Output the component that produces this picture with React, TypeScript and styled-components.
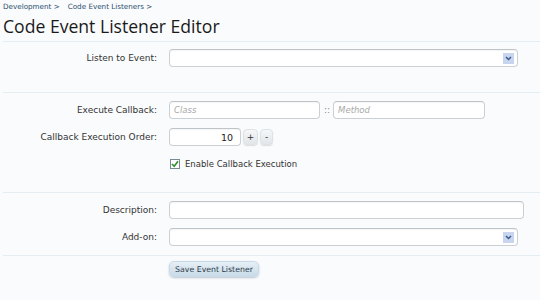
import React from "react";
import styled, { createGlobalStyle } from "styled-components";

const Global = createGlobalStyle`
  html, body { margin: 0; padding: 0; }
  body {
    background: #fafbfd;
    font-family: "DejaVu Sans", Verdana, sans-serif;
    color: #333;
    width: 540px;
    height: 300px;
    overflow: hidden;
  }
`;

const Page = styled.div`
  padding-left: 3px;
`;

const Breadcrumb = styled.div`
  display: flex;
  gap: 8px;
  height: 14px;
  line-height: 13px;
  font-size: 7.2px;
  color: #2b4f6d;
`;

const Crumb = styled.span`
  white-space: nowrap;
`;

const Header = styled.div`
  padding-bottom: 3px;
  border-bottom: 1px solid #e1eef4;
`;

const Title = styled.h1`
  margin: 0;
  font-family: "Open Sans", sans-serif;
  font-weight: 400;
  font-size: 17.6px;
  line-height: 24px;
  color: #1a1a1a;
`;

const Fieldset = styled.div<{ $top: number; $bottom: number; $gap?: number }>`
  display: flex;
  flex-direction: column;
  gap: ${(p) => p.$gap ?? 9}px;
  padding-top: ${(p) => p.$top}px;
  padding-bottom: ${(p) => p.$bottom}px;
  border-bottom: 1px solid #e4edf2;
`;

const Row = styled.div`
  display: flex;
  align-items: center;
  height: 18px;
`;

const Label = styled.div`
  width: 154px;
  margin-right: 12px;
  text-align: right;
  font-size: 9px;
  color: #333;
  white-space: nowrap;
`;

const Controls = styled.div`
  display: flex;
  align-items: center;
  height: 18px;
`;

const TextInput = styled.div<{ $w: number; $align?: string }>`
  box-sizing: border-box;
  width: ${(p) => p.$w}px;
  height: 18px;
  background: #fff;
  border: 1px solid #cbd0d4;
  border-top-color: #bfc4c9;
  border-radius: 4px;
  box-shadow: inset 0 1px 1px rgba(0, 0, 0, 0.04);
  display: flex;
  align-items: center;
  justify-content: ${(p) => p.$align ?? "flex-start"};
  padding: 0 4px;
  font-size: 9px;
`;

const Placeholder = styled.span`
  font-style: italic;
  color: #a9a9a9;
  font-size: 8.5px;
`;

const NumberText = styled.span`
  font-size: 9.5px;
  color: #222;
  padding-right: 3px;
`;

const SelectBox = styled(TextInput)`
  justify-content: flex-end;
  padding: 0 3px 0 4px;
`;

const ArrowBox = styled.span`
  width: 11px;
  height: 11px;
  background: #c7d5ee;
  display: flex;
  align-items: center;
  justify-content: center;
`;

const Sep = styled.span`
  font-size: 9px;
  color: #888;
  margin: 0 3px 0 4px;
`;

const Spin = styled.button<{ $w: number }>`
  box-sizing: border-box;
  width: ${(p) => p.$w}px;
  height: 16px;
  margin-left: 2px;
  padding: 0;
  border: 1px solid #dde2e6;
  border-radius: 4px;
  background: linear-gradient(#f5f7f8, #e2e6ea);
  box-shadow: 0 1px 1px rgba(0, 0, 0, 0.12);
  font-family: "DejaVu Sans", sans-serif;
  font-size: 9px;
  line-height: 14px;
  color: #333;
`;

const CheckWrap = styled.label`
  display: flex;
  align-items: center;
  gap: 5px;
  margin-left: 1px;
  font-size: 8.5px;
  color: #333;
`;

const CheckBox = styled.span`
  box-sizing: border-box;
  width: 10px;
  height: 10px;
  border: 1px solid #7a8a95;
  background: #fff;
  display: flex;
  align-items: center;
  justify-content: center;
`;

const Submit = styled.div`
  display: flex;
  padding-top: 5px;
  padding-left: 166px;
`;

const SaveButton = styled.button`
  box-sizing: border-box;
  width: 90px;
  height: 16px;
  padding: 0;
  border: 1px solid #c9d9e6;
  border-radius: 5px;
  background: linear-gradient(#e6eff6, #c9dbe8);
  box-shadow: 0 1px 2px rgba(70, 100, 130, 0.35);
  font-family: "DejaVu Sans", sans-serif;
  font-size: 7.8px;
  color: #2a3a48;
  white-space: nowrap;
`;

const Arrow = () => (
  <ArrowBox>
    <svg width="7" height="5" viewBox="0 0 7 5">
      <path d="M1 1 L3.5 3.5 L6 1" fill="none" stroke="#3c5a8c" strokeWidth="1.5" />
    </svg>
  </ArrowBox>
);

export default function App() {
  return (
    <Page>
      <Global />
      <Breadcrumb>
        <Crumb>Development &gt;</Crumb>
        <Crumb>Code Event Listeners &gt;</Crumb>
      </Breadcrumb>
      <Header>
        <Title>Code Event Listener Editor</Title>
      </Header>

      <Fieldset $top={7} $bottom={25}>
        <Row>
          <Label>Listen to Event:</Label>
          <SelectBox $w={349}>
            <Arrow />
          </SelectBox>
        </Row>
      </Fieldset>

      <Fieldset $top={8} $bottom={19}>
        <Row>
          <Label>Execute Callback:</Label>
          <Controls>
            <TextInput $w={151}>
              <Placeholder>Class</Placeholder>
            </TextInput>
            <Sep>::</Sep>
            <TextInput $w={152}>
              <Placeholder>Method</Placeholder>
            </TextInput>
          </Controls>
        </Row>
        <Row>
          <Label>Callback Execution Order:</Label>
          <Controls>
            <TextInput $w={72} $align="flex-end">
              <NumberText>10</NumberText>
            </TextInput>
            <Spin $w={15}>+</Spin>
            <Spin $w={13}>-</Spin>
          </Controls>
        </Row>
        <Row>
          <Label />
          <CheckWrap>
            <CheckBox>
              <svg width="8" height="8" viewBox="0 0 8 8">
                <path d="M1 4 L3.2 6.3 L7 1.2" fill="none" stroke="#2f8f2a" strokeWidth="1.6" />
              </svg>
            </CheckBox>
            Enable Callback Execution
          </CheckWrap>
        </Row>
      </Fieldset>

      <Fieldset $top={8} $bottom={9}>
        <Row>
          <Label>Description:</Label>
          <TextInput $w={355} />
        </Row>
        <Row>
          <Label>Add-on:</Label>
          <SelectBox $w={349}>
            <Arrow />
          </SelectBox>
        </Row>
      </Fieldset>

      <Submit>
        <SaveButton>Save Event Listener</SaveButton>
      </Submit>
    </Page>
  );
}
